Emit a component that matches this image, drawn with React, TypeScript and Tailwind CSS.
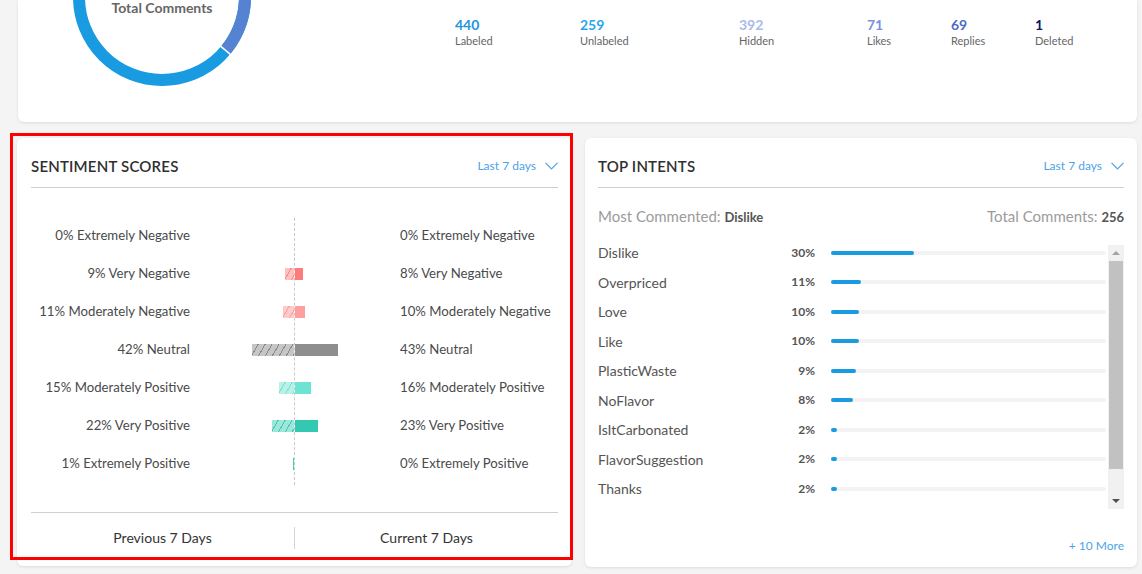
import React from 'react';

const font = { fontFamily: 'Lato, "Open Sans", sans-serif' };

// 감성 점수 데이터
const sentiments = [
  { name: 'Extremely Negative', prev: 0, cur: 0, prevCls: 'bg-[#ffc0c0]', curCls: 'bg-[#ff7b7b]' },
  {
    name: 'Very Negative', prev: 9, cur: 8,
    prevCls: 'bg-[repeating-linear-gradient(120deg,#ffc0c0_0px,#ffc0c0_5px,#f28c8c_5px,#f28c8c_6px)]',
    curCls: 'bg-[#ff7b7b]',
  },
  {
    name: 'Moderately Negative', prev: 11, cur: 10,
    prevCls: 'bg-[repeating-linear-gradient(120deg,#ffcaca_0px,#ffcaca_5px,#f4a3a3_5px,#f4a3a3_6px)]',
    curCls: 'bg-[#ff9e9e]',
  },
  {
    name: 'Neutral', prev: 42, cur: 43,
    prevCls: 'bg-[repeating-linear-gradient(120deg,#c6c6c6_0px,#c6c6c6_5px,#8a8a8a_5px,#8a8a8a_6px)]',
    curCls: 'bg-[#8e8e8e]',
  },
  {
    name: 'Moderately Positive', prev: 15, cur: 16,
    prevCls: 'bg-[repeating-linear-gradient(120deg,#b8f1e8_0px,#b8f1e8_5px,#7ddfcf_5px,#7ddfcf_6px)]',
    curCls: 'bg-[#6de4d3]',
  },
  {
    name: 'Very Positive', prev: 22, cur: 23,
    prevCls: 'bg-[repeating-linear-gradient(120deg,#9ee6da_0px,#9ee6da_5px,#3fcab3_5px,#3fcab3_6px)]',
    curCls: 'bg-[#33c9b1]',
  },
  { name: 'Extremely Positive', prev: 1, cur: 0, prevCls: 'bg-[#45c9b3]', curCls: 'bg-[#33c9b1]' },
];

const intents = [
  { name: 'Dislike', pct: 30 },
  { name: 'Overpriced', pct: 11 },
  { name: 'Love', pct: 10 },
  { name: 'Like', pct: 10 },
  { name: 'PlasticWaste', pct: 9 },
  { name: 'NoFlavor', pct: 8 },
  { name: 'IsItCarbonated', pct: 2 },
  { name: 'FlavorSuggestion', pct: 2 },
  { name: 'Thanks', pct: 2 },
];

const stats = [
  { value: '440', label: 'Labeled', cls: 'text-[#1f95dd]', w: 'w-[125px]' },
  { value: '259', label: 'Unlabeled', cls: 'text-[#2aa6ee]', w: 'w-[159px]' },
  { value: '392', label: 'Hidden', cls: 'text-[#a9b9ef]', w: 'w-[128px]' },
  { value: '71', label: 'Likes', cls: 'text-[#7b8fe0]', w: 'w-[84px]' },
  { value: '69', label: 'Replies', cls: 'text-[#4d6bc6]', w: 'w-[84px]' },
  { value: '1', label: 'Deleted', cls: 'text-[#0b1670]', w: 'w-[84px]' },
];

function Chevron() {
  return (
    <svg width="13" height="8" viewBox="0 0 13 8" fill="none">
      <polyline points="0.5,0.8 6.5,6.8 12.5,0.8" stroke="#4ea3e6" strokeWidth="1.2" />
    </svg>
  );
}

function CardHeader({ title }: { title: string }) {
  return (
    <div className="flex items-center justify-between border-b border-[#cfcfcf] pb-[11px]">
      <h2 className="text-[15px] leading-5 font-semibold text-[#2f2f2f] tracking-[0.2px]">{title}</h2>
      <div className="flex items-center gap-[9px] text-[12px] text-[#4ea3e6]">
        <span>Last 7 days</span>
        <Chevron />
      </div>
    </div>
  );
}

function Donut() {
  const r = 83;
  const c = 2 * Math.PI * r;
  const seg = (90 / 360) * c;
  return (
    <div className="relative w-[180px] h-[180px] mt-[-93px] ml-[54px] shrink-0">
      <svg width="180" height="180" viewBox="0 0 180 180">
        <circle cx="90" cy="90" r={r} fill="none" stroke="#189be1" strokeWidth="12" />
        <circle
          cx="90"
          cy="90"
          r={r}
          fill="none"
          stroke="#5583d1"
          strokeWidth="12"
          strokeDasharray={`${seg} ${c}`}
          transform="rotate(-50 90 90)"
        />
        <line x1="90" y1="90" x2={90 + 90 * Math.sin((130 * Math.PI) / 180)} y2={90 - 90 * Math.cos((130 * Math.PI) / 180)} stroke="#fff" strokeWidth="1.5" />
        <circle cx="90" cy="90" r="76" fill="#fff" />
      </svg>
      <div className="absolute left-0 right-0 top-[91px] text-center text-[14px] leading-5 font-bold text-[#666]">
        Total Comments
      </div>
    </div>
  );
}

export default function App() {
  return (
    <div className="min-h-[574px] bg-[#f4f4f4] pl-[17px] pr-[5px] pb-4 overflow-hidden" style={font}>
      {/* 상단 통계 카드 */}
      <div className="ml-px h-[122px] bg-white rounded-b-md shadow-[0_1px_3px_rgba(0,0,0,0.1)] flex items-start overflow-hidden">
        <Donut />
        <div className="ml-[203px] pt-[16px] flex">
          {stats.map((s) => (
            <div key={s.label} className={s.w}>
              <div className={`text-[14px] leading-[18px] font-bold ${s.cls}`}>{s.value}</div>
              <div className="text-[11px] leading-[14px] text-[#666]">{s.label}</div>
            </div>
          ))}
        </div>
      </div>

      <div className="mt-4 flex gap-[13px]">
        {/* 감성 점수 카드 */}
        <div className="relative w-[555px] h-[428px] bg-white rounded-md shadow-[0_1px_3px_rgba(0,0,0,0.1)] px-[14px] pt-[18px]">
          <CardHeader title="SENTIMENT SCORES" />

          <div className="relative mt-[29px]">
            <div className="absolute top-px bottom-[-2px] left-[263px] border-l border-dashed border-[#c9c9c9]" />
            {sentiments.map((s) => (
              <div key={s.name} className="flex items-center h-[38px] text-[13.2px] text-[#4a4a4a]">
                <div className="w-[159px] text-right whitespace-nowrap">
                  {s.prev}% {s.name}
                </div>
                <div className="ml-[10px] w-[188px] flex items-center h-3">
                  <div className="w-[94px] flex justify-end">
                    <div className={`h-3 ${s.prevCls}`} style={{ width: s.prev }} />
                  </div>
                  <div className="w-[94px] pl-px">
                    <div className={`h-3 ${s.curCls}`} style={{ width: s.cur }} />
                  </div>
                </div>
                <div className="ml-[12px] whitespace-nowrap">
                  {s.cur}% {s.name}
                </div>
              </div>
            ))}
          </div>

          <div className="mt-[29px] border-t border-[#cfcfcf] flex items-center h-[50px] text-[14px] text-[#333]">
            <div className="flex-1 text-center">Previous 7 Days</div>
            <div className="w-px h-[22px] bg-[#d4d4d4]" />
            <div className="flex-1 text-center">Current 7 Days</div>
          </div>

          {/* 선택 영역 표시 */}
          <div className="absolute left-[-7px] top-[-5px] w-[563px] h-[427px] border-[3px] border-[#ff0000] pointer-events-none" />
        </div>

        {/* 상위 인텐트 카드 */}
        <div className="w-[552px] h-[429px] bg-white rounded-md shadow-[0_1px_3px_rgba(0,0,0,0.1)] px-[13px] pt-[18px]">
          <CardHeader title="TOP INTENTS" />

          <div className="mt-[18px] flex items-center justify-between text-[15px] leading-5 text-[#9b9b9b]">
            <div>
              Most Commented: <span className="text-[13px] font-bold text-[#555]">Dislike</span>
            </div>
            <div>
              Total Comments: <span className="text-[13px] font-bold text-[#555]">256</span>
            </div>
          </div>

          <div className="mt-[11px] flex items-start">
            <div className="w-[508px]">
              {intents.map((it) => (
                <div key={it.name} className="flex items-center h-[29.5px]">
                  <div className="w-[185px] text-[14px] text-[#555]">{it.name}</div>
                  <div className="w-[32px] text-right text-[12px] font-bold text-[#555]">{it.pct}%</div>
                  <div className="ml-[16px] w-[275px] h-1 rounded-full bg-[#f3f3f3]">
                    <div className="h-1 rounded-full bg-[#189be1]" style={{ width: `${it.pct}%` }} />
                  </div>
                </div>
              ))}
            </div>
            {/* 스크롤바 */}
            <div className="ml-[2px] mt-[7px] w-[16px] h-[264px] bg-[#f1f1f1] flex flex-col items-center">
              <div className="h-[16px] flex items-center justify-center">
                <div className="w-0 h-0 border-l-[4px] border-r-[4px] border-b-[4px] border-l-transparent border-r-transparent border-b-[#a3a3a3]" />
              </div>
              <div className="w-[14px] h-[208px] bg-[#c1c1c1]" />
              <div className="flex-1" />
              <div className="h-[16px] flex items-center justify-center">
                <div className="w-0 h-0 border-l-[4px] border-r-[4px] border-t-[4px] border-l-transparent border-r-transparent border-t-[#505050]" />
              </div>
            </div>
          </div>

          <div className="mt-[29px] text-right text-[12px] leading-4 text-[#4ea3e6]">+ 10 More</div>
        </div>
      </div>
    </div>
  );
}
